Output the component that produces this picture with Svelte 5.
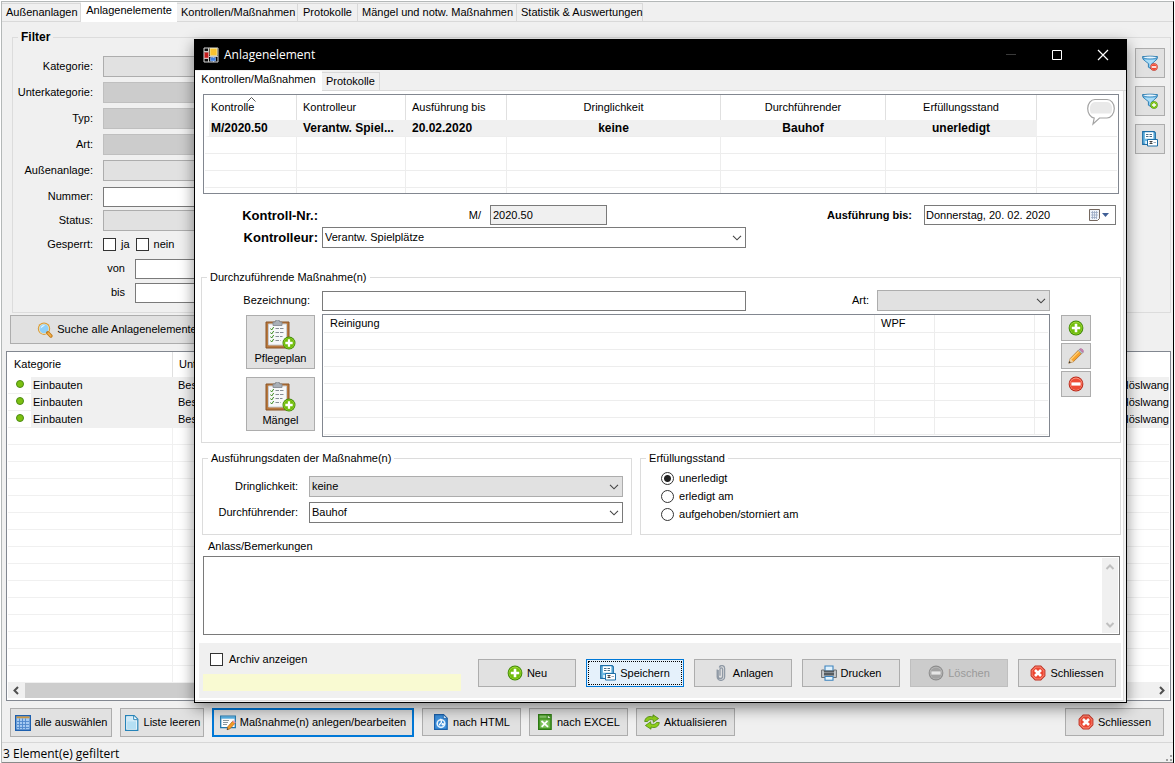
<script>
  const mainTabs = ['Außenanlagen', 'Anlagenelemente', 'Kontrollen/Maßnahmen', 'Protokolle', 'Mängel und notw. Maßnahmen', 'Statistik & Auswertungen'];
  const mainTabWidths = [79, 96, 121, 60, 159, 126];
  const filters = [
    { id: 'kategorie', label: 'Kategorie:', kind: 'select' },
    { id: 'unterkategorie', label: 'Unterkategorie:', kind: 'off' },
    { id: 'typ', label: 'Typ:', kind: 'off' },
    { id: 'art', label: 'Art:', kind: 'off' },
    { id: 'anlage', label: 'Außenanlage:', kind: 'select' },
    { id: 'nummer', label: 'Nummer:', kind: 'text' }
  ];
  const elements = [1, 2, 3];
  const emptyRows = Array.from({ length: 15 });
  const emptyChecks = Array.from({ length: 3 });
  const emptyTasks = Array.from({ length: 6 });
  let status = $state('unerledigt');
  const states = ['unerledigt', 'erledigt am', 'aufgehoben/storniert am'];
</script>

{#snippet plusDisc(x, y, s)}
  <svg {x} {y} width={s} height={s} viewBox="0 0 16 16">
    <circle cx="8" cy="8" r="7.4" fill="#3f8a05" />
    <circle cx="8" cy="8" r="6.4" fill="#a6dc3c" />
    <circle cx="8" cy="8.2" r="5.8" fill="#71bd0b" />
    <path d="M6.7 3.8h2.6v2.9h2.9v2.6H9.3v2.9H6.7V9.3H3.8V6.7h2.9z" fill="#fff" />
  </svg>
{/snippet}

{#snippet minusDisc(x, y, s)}
  <svg {x} {y} width={s} height={s} viewBox="0 0 16 16">
    <circle cx="8" cy="8" r="7.4" fill="#bb2719" />
    <circle cx="8" cy="8" r="6.4" fill="#ff9b86" />
    <circle cx="8" cy="8.2" r="5.8" fill="#ee4a34" />
    <path d="M3.4 6.4h9.2v3.2H3.4z" fill="#fff" />
  </svg>
{/snippet}

{#snippet chevron()}
  <svg class="chev" width="10" height="6" viewBox="0 0 10 6" aria-hidden="true"><path d="M1 .8l4 4 4-4" fill="none" stroke="#444" stroke-width="1.1" /></svg>
{/snippet}

{#snippet icon(name)}
  <svg class="icon" width="16" height="16" viewBox="0 0 16 16" aria-hidden="true">
    {#if name === 'plus'}
      {@render plusDisc(0, 0, 16)}
    {:else if name === 'minus'}
      {@render minusDisc(0, 0, 16)}
    {:else if name === 'minus-off'}
      <circle cx="8" cy="8" r="7.4" fill="#8d8d8d" />
      <circle cx="8" cy="8" r="6.3" fill="#bcbcbc" />
      <circle cx="8" cy="8.2" r="5.6" fill="#a2a2a2" />
      <path d="M3.4 6.4h9.2v3.2H3.4z" fill="#e6e6e6" />
    {:else if name === 'close'}
      <path d="M5 .6h6L15.4 5v6L11 15.4H5L.6 11V5z" fill="#bf2a1c" />
      <path d="M5.4 1.6h5.2l3.8 3.8v5.2l-3.8 3.8H5.4l-3.8-3.8V5.4z" fill="#ff927f" />
      <path d="M5.8 2.4h4.4l3.4 3.4v4.4l-3.4 3.4H5.8l-3.4-3.4V5.8z" fill="#ec4632" />
      <path d="M5 5l6 6M11 5l-6 6" stroke="#fff" stroke-width="2.6" />
    {:else if name === 'funnel-minus' || name === 'funnel-plus'}
      <path d="M.6 1.5h14.8L15 4.2 10 8.6v5.6l-3.6-2V8.6L1 4.2z" fill="#5db2e6" stroke="#2878ad" stroke-width=".9" />
      <path d="M2 4.6h12L9 9v3.6L7.4 12V8.8z" fill="#a9dcf7" />
      <ellipse cx="8" cy="2.5" rx="7" ry="1.4" fill="#e8f6ff" stroke="#2878ad" stroke-width=".7" />
      {#if name === 'funnel-minus'}{@render minusDisc(8, 8, 8)}{:else}{@render plusDisc(8, 8, 8)}{/if}
    {:else if name === 'save'}
      <path d="M.7.7h11.5l1.1 1.1v11.5H.7z" fill="#6fb9e3" stroke="#1d6ea6" stroke-width="1.2" />
      <path d="M3 1.3h8.3v6.4H3z" fill="#fff" />
      <path d="M4 3.5h2.5M7.5 3.5h2.5M4 5.5h2.5M7.5 5.5h2.5" stroke="#4d6f86" />
      <path d="M3.2 10h3v3h-3z" fill="#e5f4fd" />
      <path d="M5.5 8.5h10v6.500h-10z" fill="#fff" stroke="#1d6ea6" />
      <path d="M7.500 10.500h3M7.500 12.500h3M9 10.500v2" stroke="#333" stroke-width=".9" />
      <path d="M11.500 11.500h2.500" stroke="#9ab" />
    {:else if name === 'search'}
      <circle cx="7" cy="6.7" r="6.2" fill="#d99a33" />
      <circle cx="7" cy="6.7" r="5.2" fill="#f3e2b8" />
      <circle cx="7" cy="6.7" r="4.5" fill="#8fd0fa" />
      <path d="M3.6 6.5A3.6 3.6 0 018 3.2z" fill="#e4f6ff" />
      <path d="M10.8 10.8l3.1 3.2" stroke="#c07a1a" stroke-width="3.4" stroke-linecap="round" />
      <path d="M11.2 11.2l2.5 2.6" stroke="#f4b04a" stroke-width="1.8" stroke-linecap="round" />
    {:else if name === 'grid'}
      <path d="M.7.7h14.6v14.6H.7z" fill="#a4caf2" stroke="#1d5fae" stroke-width="1.4" />
      <path d="M1.4 1.4h13.2v1.9H1.4z" fill="#c79545" />
      <path d="M2 6.500h12M2 9.500h12M2 12.500h12M4.500 3.500v10.800M7.500 3.500v10.800M10.500 3.500v10.800" stroke="#4f88cc" stroke-width=".9" />
    {:else if name === 'page'}
      <path d="M1.6.6h8.6l3.6 3.6v11.2H1.6z" fill="#fff" stroke="#2583b8" stroke-width="1.2" />
      <path d="M3 2h5.8v3.4h3.6V14H3z" fill="#cfeaf8" />
      <path d="M3.2 6.5h9v7.4h-9z" fill="#b5dff3" />
      <path d="M9.7 1v3.7h3.7" fill="#fff" stroke="#2583b8" />
    {:else if name === 'form-edit'}
      <path d="M.7 1.2h14.6v11.5H.7z" fill="#fff" stroke="#2176ad" stroke-width="1.3" />
      <path d="M1 1.5h14v2.2H1z" fill="#57b0e4" />
      <path d="M3 5.500h6M3 7.500h5M3 9.500h4" stroke="#8b98a0" />
      <path d="M7 14.7l.8-3 5-5.6 2.3 2-5.1 5.7z" fill="#f59b26" stroke="#a8651a" stroke-width=".7" />
      <path d="M12.4 6.5l1.2-1.3 2.2 2-1.1 1.3z" fill="#e69ab6" />
      <path d="M6.8 15l.6-1.7 1.2 1z" fill="#333" />
    {:else if name === 'html'}
      <path d="M1.6.6h9l3.6 3.6v11.2H1.6z" fill="#3c8fdb" stroke="#1b5fa8" stroke-width="1.2" />
      <path d="M10.3 1v3.6h3.6" fill="#d8ecfb" stroke="#1b5fa8" stroke-width=".8" />
      <circle cx="8" cy="9.600" r="3.800" fill="none" stroke="#e6f3fd" stroke-width="1.600" />
      <path d="M8 4.800c-.6 2 1.300 2.500.2 4-1 1-2 .8-1.600 2.600" fill="none" stroke="#fff" stroke-width="1.300" />
      <circle cx="9.800" cy="10.300" r="1.200" fill="#fff" />
    {:else if name === 'excel'}
      <path d="M1.600.6h12.600v14.800H1.600z" fill="#4f9f2c" stroke="#2e7a14" stroke-width="1.200" />
      <path d="M2.600 1.600h7v2.200h-7z" fill="#83c465" />
      <path d="M10.300 1v3.600h3.600" fill="#e4f5dc" stroke="#2e7a14" stroke-width=".8" />
      <path d="M3.200 5.800h9.400v8H3.200z" fill="#7dc25c" />
      <path d="M4.500 7l6.500 5.800M10.500 6.800l-5.800 6" stroke="#fff" stroke-width="1.700" />
    {:else if name === 'refresh'}
      <path d="M.7 7.500C1 3.500 5 1.400 9 3V.8l5.600 3.700L9.300 8.300V6C7 5.200 4.300 5.600 3.600 7.500z" fill="#8fce1c" stroke="#4b8a0a" stroke-width=".8" />
      <path d="M15.300 8.500c-.3 4-4.300 6.100-8.300 4.500v2.200L1.400 11.500 6.700 7.700V10c2.300.8 5 .4 5.700-1.500z" fill="#8fce1c" stroke="#4b8a0a" stroke-width=".8" />
    {:else if name === 'clip'}
      <path d="M5.200 5v6.300a2.200 2.200 0 004.400 0V4.200a1.300 1.300 0 00-2.600 0v6.600M4.200 4.500v7.200a3.700 3.700 0 007.400 0V3.300A2.700 2.700 0 006.300 2.500" fill="none" stroke="#8f99a5" stroke-width="1.300" />
    {:else if name === 'print'}
      <path d="M4 1h8v5H4z" fill="#dff1fd" stroke="#3d83bd" stroke-width="1.100" />
      <path d="M.6 5h2.600v1.500h9.600V5h2.600v7.500H.6z" fill="#c5c8cb" stroke="#6a6e72" />
      <path d="M3 5.500h10v5H3z" fill="#555b60" />
      <path d="M3 7.500h10" stroke="#878d92" />
      <path d="M4 11.500h8v3.700H4z" fill="#e4f4fe" stroke="#3d83bd" stroke-width="1.100" />
    {:else if name === 'pencil'}
      <path d="M.8 15.200l1.500-4.700L10.600 2l3.300 3.300-8.400 8.300z" fill="#f8a32b" stroke="#a06420" stroke-width=".7" />
      <path d="M2.900 11.300l8.700-8.700" stroke="#ffd27a" stroke-width="1.300" />
      <path d="M.8 15.200l1.500-4.700 3.200 3.100z" fill="#efd2a4" />
      <path d="M.7 15.300l.7-2.200 1.500 1.500z" fill="#333" />
      <path d="M10.200 2.500l1.400-1.400 3.300 3.300-1.400 1.400z" fill="#b9c4cc" stroke="#76828c" stroke-width=".5" />
      <path d="M11.600 1.100c1.600-1.700 5 1.600 3.300 3.300z" fill="#d982bb" stroke="#9c5b88" stroke-width=".6" />
    {/if}
  </svg>
{/snippet}

{#snippet clipboard()}
  <svg width="32" height="32" viewBox="1 1 32 32" aria-hidden="true">
    <path d="M2 3h23v26H2z" fill="#b9793f" stroke="#8a5426" />
    <path d="M4.500 5h18v21h-18z" fill="#f7f8f9" stroke="#c9ccd0" />
    <path d="M9 3h2.200a2.300 2.300 0 014.600 0H18v3.500H9z" fill="#a9afb6" stroke="#7d848c" stroke-width=".8" />
    <path d="M6.500 9.500l1.200 1.500 2-3M6.500 13.500l1.200 1.500 2-3M6.500 17.500l1.200 1.500 2-3M6.500 21.500l1.200 1.500 2-3" fill="none" stroke="#3c8c1c" />
    <path d="M11.500 9.500h8M11.500 13.500h8M11.500 17.500h7M11.500 21.500h5" stroke="#868d95" stroke-dasharray="3.500 1" />
    {@render plusDisc(18, 17, 14)}
  </svg>
{/snippet}

<div class="window">
  <nav class="tabs">
    {#each mainTabs as tab, i}
      <button class="tab" class:active={i === 1} style="width:{mainTabWidths[i]}px">{tab}</button>
    {/each}
  </nav>

  <fieldset class="filter">
    <legend>Filter</legend>
    <div class="filter-body">
      <div class="filter-fields">
        <div class="wide-rows">
          {#each filters as f}
            <div class="frow">
              <label for={f.id}>{f.label}</label>
              {#if f.kind === 'text'}
                <input class="box" id={f.id} type="text" />
              {:else}
                <select class="combo gray" class:off={f.kind === 'off'} id={f.id} disabled={f.kind === 'off'}><option></option></select>
              {/if}
            </div>
          {/each}
        </div>
        <div class="tight-rows">
          <div class="frow"><label for="fstatus">Status:</label><select class="combo gray" id="fstatus"><option></option></select></div>
          <div class="frow">
            <span class="flabel">Gesperrt:</span>
            <input class="check" type="checkbox" id="ja" /><label class="tick" for="ja">ja</label>
            <input class="check" type="checkbox" id="nein" /><label class="tick" for="nein">nein</label>
          </div>
          <div class="frow range"><label for="von">von</label><input class="box" id="von" type="text" /></div>
          <div class="frow range"><label for="bis">bis</label><input class="box" id="bis" type="text" /></div>
        </div>
      </div>
      <div class="filter-tools">
        <button class="btn" aria-label="Filter entfernen">{@render icon('funnel-minus')}</button>
        <button class="btn" aria-label="Filter hinzufügen">{@render icon('funnel-plus')}</button>
        <button class="btn" aria-label="Filter speichern">{@render icon('save')}</button>
      </div>
    </div>
  </fieldset>

  <button class="btn search">{@render icon('search')}Suche alle Anlagenelemente</button>

  <div class="list">
    <table>
      <colgroup><col class="c-kat" /><col /><col class="c-ort" /></colgroup>
      <thead><tr><th class="ruled">Kategorie</th><th>Unterkategorie</th><th></th></tr></thead>
      <tbody>
        {#each elements as e (e)}
          <tr class="picked">
            <td class="kat"><span class="dot-cell"><svg width="8" height="8" viewBox="0 0 8 8" aria-hidden="true"><circle cx="4" cy="4" r="3.500" fill="#7cc011" stroke="#4b8a12" /></svg></span><span>Einbauten</span></td>
            <td>Bestand</td><td class="ort">Höslwang</td>
          </tr>
        {/each}
        {#each emptyRows as _}
          <tr><td class="ruled"></td><td></td><td></td></tr>
        {/each}
      </tbody>
    </table>
    <div class="hscroll">
      <svg width="17" height="15" viewBox="0 0 17 15"><path d="M10 4L6.500 7.500 10 11" fill="none" stroke="#505050" stroke-width="2" /></svg>
      <div class="thumb"></div>
      <svg width="17" height="15" viewBox="0 0 17 15"><path d="M8 4l3.500 3.500L8 11" fill="none" stroke="#505050" stroke-width="2" /></svg>
    </div>
  </div>

  <div class="actions">
    <button class="btn w102">{@render icon('grid')}alle auswählen</button>
    <button class="btn w84">{@render icon('page')}Liste leeren</button>
    <button class="btn w202 primary">{@render icon('form-edit')}Maßnahme(n) anlegen/bearbeiten</button>
    <button class="btn w99">{@render icon('html')}nach HTML</button>
    <button class="btn w99">{@render icon('excel')}nach EXCEL</button>
    <button class="btn w99">{@render icon('refresh')}Aktualisieren</button>
    <button class="btn w99 last">{@render icon('close')}Schliessen</button>
  </div>

  <footer>
    <span>3 Element(e) gefiltert</span>
    <svg width="8" height="8" viewBox="0 0 8 8" aria-hidden="true"><path d="M5 1h2v2H5zM5 5h2v2H5zM1 5h2v2H1z" fill="#a0a0a0" /></svg>
  </footer>
</div>

<div class="dialog" role="dialog" aria-labelledby="dlg-title">
  <header>
    <svg width="16" height="16" viewBox="0 0 16 16" aria-hidden="true">
      <path d="M1 1h14v14H1z" fill="#0a0a0a" stroke="#d9d9d9" />
      <path d="M1 4.500h5M5.500 1v14M1 11.500h5M5.500 9.500H15M10.500 10v5" stroke="#c9c9c9" />
      <path d="M7 1.500h7v7H7z" fill="#f9c230" stroke="#fff0a8" stroke-width=".8" />
      <path d="M1.500 5.500h4v5.500h-4z" fill="#c61d1d" stroke="#f19a9a" stroke-width=".6" />
      <path d="M7.500 10.500h5V14h-5z" fill="#3f7fe0" stroke="#a8caff" stroke-width=".6" />
    </svg>
    <h1 id="dlg-title">Anlagenelement</h1>
    <div class="win-buttons">
      <button aria-label="Minimieren"><svg width="12" height="12" viewBox="0 0 12 12"><path d="M1 5.500h10" stroke="#3a3a3a" /></svg></button>
      <button aria-label="Maximieren"><svg width="12" height="12" viewBox="0 0 12 12"><path d="M1.500 1.500h9v9h-9z" fill="none" stroke="#fff" /></svg></button>
      <button aria-label="Fenster schließen"><svg width="12" height="12" viewBox="0 0 12 12"><path d="M1 1l10 10M11 1L1 11" stroke="#fff" stroke-width="1.200" /></svg></button>
    </div>
  </header>
  <nav class="tabs dtabs">
    <button class="tab active">Kontrollen/Maßnahmen</button>
    <button class="tab">Protokolle</button>
  </nav>

  <div class="panel">
    <div class="grid-box checks">
      <table>
        <colgroup><col style="width:92px" /><col style="width:109px" /><col style="width:101px" /><col /><col style="width:165px" /><col style="width:151px" /><col style="width:80px" /></colgroup>
        <thead>
          <tr>
            <th class="sorted">Kontrolle<svg width="9" height="5" viewBox="0 0 9 5" aria-hidden="true"><path d="M.5 4.500l4-4 4 4" fill="none" stroke="#555" /></svg></th>
            <th>Kontrolleur</th><th>Ausführung bis</th><th class="mid">Dringlichkeit</th><th class="mid">Durchführender</th><th class="mid">Erfüllungsstand</th><th></th>
          </tr>
        </thead>
        <tbody>
          <tr class="picked"><td class="first">M/2020.50</td><td>Verantw. Spiel...</td><td>20.02.2020</td><td class="mid">keine</td><td class="mid">Bauhof</td><td class="mid">unerledigt</td><td></td></tr>
          {#each emptyChecks as _}
            <tr><td></td><td></td><td></td><td></td><td></td><td></td><td></td></tr>
          {/each}
          <tr class="rest"><td></td><td></td><td></td><td></td><td></td><td></td><td></td></tr>
        </tbody>
      </table>
      <svg class="bubble" width="28" height="28" viewBox="0 0 28 28" aria-hidden="true">
        <path d="M8 1.500h12c4 0 7.300 4 7.300 9s-3.300 9.500-7.300 9.500h-7.500L6 26l1.200-6C3.500 19.500.7 15.500.7 10.500c0-5 3.300-9 7.300-9z" fill="#fff" stroke="#a3a3a3" stroke-width="1.200" />
        <path d="M8 4h12c3 0 5 3 5 6s-.3 4-1 5.500H4c-.7-1.500-1-2.500-1-5.500s2-6 5-6z" fill="#e9e9e9" />
      </svg>
    </div>

    <div class="head-form">
      <div class="hrow">
        <label class="strong" for="nr">Kontroll-Nr.:</label>
        <span class="prefix">M/</span>
        <input class="box nr" id="nr" type="text" value="2020.50" readonly />
        <label class="due" for="due">Ausführung bis:</label>
        <div class="date box">
          <input id="due" type="text" value="Donnerstag, 20. 02. 2020" />
          <button aria-label="Kalender öffnen">
            <svg width="24" height="14" viewBox="0 0 24 14"><path d="M1.500 1.500h10v9l-2 2h-8z" fill="#eef3fa" stroke="#75685f" /><path d="M3 4.500h7M3 7h7M3 9.500h6M4.500 3v8M6.500 3v8M8.500 3v8" stroke="#9aaac4" stroke-width=".8" /><path d="M14 5h7l-3.500 4z" fill="#3f5f96" /></svg>
          </button>
        </div>
      </div>
      <div class="hrow">
        <label class="strong" for="person">Kontrolleur:</label>
        <span class="select person"><select class="combo" id="person"><option>Verantw. Spielplätze</option></select>{@render chevron()}</span>
      </div>
    </div>

    <fieldset class="tasks">
      <legend>Durchzuführende Maßnahme(n)</legend>
      <div class="task-grid">
        <label class="bez" for="bez">Bezeichnung:</label>
        <div class="bez-row">
          <input class="box" id="bez" type="text" />
          <label for="dart">Art:</label>
          <span class="select"><select class="combo gray" id="dart"><option></option></select>{@render chevron()}</span>
        </div>
        <span></span>
        <div class="plans">
          <button class="btn">{@render clipboard()}Pflegeplan</button>
          <button class="btn">{@render clipboard()}Mängel</button>
        </div>
        <div class="grid-box task-list">
          <table>
            <colgroup><col /><col style="width:60px" /><col style="width:100px" /><col style="width:13px" /></colgroup>
            <tbody>
              <tr><td>Reinigung</td><td>WPF</td><td></td><td></td></tr>
              {#each emptyTasks as _}
                <tr><td></td><td></td><td></td><td></td></tr>
              {/each}
            </tbody>
          </table>
        </div>
        <div class="task-tools">
          <button class="btn" aria-label="Hinzufügen">{@render icon('plus')}</button>
          <button class="btn" aria-label="Bearbeiten">{@render icon('pencil')}</button>
          <button class="btn" aria-label="Entfernen">{@render icon('minus')}</button>
        </div>
      </div>
    </fieldset>

    <div class="pair">
      <fieldset class="data">
        <legend>Ausführungsdaten der Maßnahme(n)</legend>
        <div class="data-rows">
          <label for="dring">Dringlichkeit:</label>
          <span class="select"><select class="combo gray" id="dring"><option>keine</option></select>{@render chevron()}</span>
          <label for="durch">Durchführender:</label>
          <span class="select"><select class="combo" id="durch"><option>Bauhof</option></select>{@render chevron()}</span>
        </div>
      </fieldset>
      <fieldset class="state">
        <legend>Erfüllungsstand</legend>
        <div class="radios">
          {#each states as s}
            <label><input type="radio" name="stand" value={s} bind:group={status} />{s}</label>
          {/each}
        </div>
      </fieldset>
    </div>

    <label class="note-label" for="note">Anlass/Bemerkungen</label>
    <div class="note">
      <textarea id="note"></textarea>
      <div class="vscroll">
        <svg width="16" height="16" viewBox="0 0 16 16"><path d="M4.500 11L8 7.500l3.500 3.500" fill="none" stroke="#bfbfbf" stroke-width="2" /></svg>
        <svg width="16" height="16" viewBox="0 0 16 16"><path d="M4.500 6L8 9.500 11.500 6" fill="none" stroke="#bfbfbf" stroke-width="2" /></svg>
      </div>
    </div>

    <div class="bottom">
      <div class="archive">
        <label><input class="check" type="checkbox" />Archiv anzeigen</label>
        <div class="notice"></div>
      </div>
      <div class="dlg-buttons">
        <button class="btn">{@render icon('plus')}Neu</button>
        <button class="btn focused">{@render icon('save')}Speichern</button>
        <button class="btn">{@render icon('clip')}Anlagen</button>
        <button class="btn">{@render icon('print')}Drucken</button>
        <button class="btn" disabled>{@render icon('minus-off')}Löschen</button>
        <button class="btn">{@render icon('close')}Schliessen</button>
      </div>
    </div>
  </div>
</div>

<style>
  :global(body) { background: #fff; }
  :global(#app) { position: relative; }
  .window, .dialog, button, input, select, textarea {
    font-family: "Liberation Sans", Arial, sans-serif;
    font-size: 11px;
    line-height: 13px;
    color: #000;
    box-sizing: border-box;
  }
  button, input, select, textarea { margin: 0; border-radius: 0; }
  .window {
    display: flex;
    flex-direction: column;
    min-height: calc(100vh - 1px);
    margin: 0 1px;
    border: 1px solid #b4b8b8;
    border-right-color: #000;
    border-bottom: 1px solid #000;
    background: #f0f0f0;
    position: relative;
    top: 1px;
  }
  .tabs {
    display: flex;
    align-items: flex-end;
    height: 19px;
    border-bottom: 1px solid #d9d9d9;
  }
  .tab {
    height: 18px;
    padding: 0 4px;
    border: 1px solid #d9d9d9;
    border-width: 1px 1px 0 0;
    background: #f0f0f0;
    white-space: nowrap;
  }
  .tab.active {
    height: 20px;
    margin-bottom: -1px;
    padding-bottom: 3px;
    border: 0;
    background: #fff;
  }

  fieldset { margin: 0; padding: 0; border: 1px solid #dcdcdc; min-width: 0; }
  legend { margin-left: 5px; padding: 0 3px; line-height: 13px; }
  .filter { margin: 9px 2px 0 10px; }
  .filter legend { font: bold 12px/13px "Liberation Sans", sans-serif; }
  .filter-body { display: flex; justify-content: space-between; padding: 4px 5px 9px 0; }
  .filter-fields { width: 300px; padding-top: 8px; }
  .wide-rows { display: grid; gap: 5px; margin-bottom: 3px; }
  .tight-rows { display: grid; gap: 3px; }
  .frow { display: flex; align-items: center; height: 21px; }
  .frow > label:first-child, .flabel { width: 80px; margin-right: 10px; text-align: right; flex: none; }
  .frow.range > label { width: 112px; }
  .frow .box, .frow .combo { flex: 1; min-width: 0; width: 0; }
  .frow .tick { margin: 0 6px 0 5px; }
  .filter-tools { display: grid; gap: 8px; align-content: start; }
  .filter-tools .btn { width: 30px; height: 30px; padding: 0; }

  .box, .combo { border: 1px solid #7a7a7a; background: #fff; padding: 0 2px; height: 20px; outline: 0; box-sizing: border-box; }
  .combo { appearance: none; height: 21px; width: 100%; }
  .gray { background: #e1e1e1; border-color: #adadad; }
  .off { background: #ccc; border-color: #bfbfbf; opacity: 1; }
  .select { display: block; position: relative; }
  .chev { position: absolute; right: 4px; top: 8px; pointer-events: none; }
  .check {
    appearance: none;
    width: 13px;
    height: 13px;
    border: 1px solid #333;
    background: #fff;
    flex: none;
  }
  .btn {
    display: flex;
    align-items: center;
    justify-content: center;
    gap: 4px;
    padding: 0 2px;
    border: 1px solid #adadad;
    background: #e1e1e1;
    white-space: nowrap;
  }
  .icon { flex: none; }
  .search { width: 214px; height: 29px; margin: 2px 0 0 8px; }

  table { width: 100%; border-collapse: separate; border-spacing: 0; table-layout: fixed; }
  th { font-weight: normal; text-align: left; }
  th, td { box-sizing: border-box; overflow: hidden; white-space: nowrap; }
  .list { margin: 7px 2px 0 4px; border: 1px solid #828790; background: #fff; padding: 0 1px 2px; }
  .c-kat { width: 165px; }
  .c-ort { width: 60px; }
  .list th { height: 25px; padding: 0 6px; }
  .list td { height: 17px; padding: 0 5px; border-bottom: 1px solid #f0f0f0; }
  .list .ruled { border-right: 1px solid #f0f0f0; }
  .list th.ruled { border-right-color: #e0e0e0; }
  .picked td { background: #f0f0f0; }
  .list .kat { padding: 0; line-height: 16px; }
  .list .ort { padding: 0; text-align: right; }
  .dot-cell { display: inline-block; width: 15px; padding-left: 8px; background: #fff; height: 16px; margin-right: 2px; }
  .dot-cell svg { display: block; margin-top: 3px; }
  .kat span { vertical-align: top; }
  .hscroll { display: flex; height: 15px; background: #f0f0f0; }
  .thumb { width: 70%; margin-right: auto; background: #cdcdcd; }

  .actions { display: flex; align-items: flex-start; gap: 8px; padding: 7px 9px 5px 8px; }
  .actions .btn { height: 28px; }
  .actions .w102, .actions .w84, .actions .w202 { height: 29px; }
  .w102 { width: 102px; }
  .w84 { width: 84px; }
  .w202 { width: 202px; }
  .w99 { width: 99px; }
  .primary { border: 2px solid #0078d7; }
  .last { margin-left: auto; }
  footer {
    display: flex;
    align-items: center;
    justify-content: space-between;
    flex: 1;
    border-top: 1px solid #d7d7d7;
    border-bottom: 1px solid #8a8a8a;
    padding: 3px 0 0 1px;
    font: 12px/16px "Open Sans", "Noto Sans", sans-serif;
  }
  footer svg { align-self: flex-end; }

  .dialog {
    position: absolute;
    left: 194px;
    right: 48px;
    top: 39px;
    border: 1px solid #000;
    background: #f0f0f0;
    box-shadow: 0 5px 14px rgba(0, 0, 0, 0.45);
  }
  header { display: flex; align-items: center; height: 30px; padding-left: 8px; background: #000; }
  h1 { margin: 0 0 0 5px; font: 12px/16px "Open Sans", "Noto Sans", sans-serif; color: #fff; }
  .win-buttons { display: flex; margin-left: auto; }
  .win-buttons button { width: 46px; height: 28px; padding: 0; border: 0; background: none; }
  .win-buttons svg { display: block; margin: auto; }
  .dtabs { height: 20px; }
  .dtabs .tab.active { width: 127px; }
  .panel { display: flex; flex-direction: column; margin: 0 2px 1px 0; padding: 3px 3px 2px 6px; border: 1px solid #dcdcdc; border-width: 0 1px 1px 0; background: #fff; }

  .grid-box { position: relative; border: 1px solid #828790; padding: 0 1px; background: #fff; }
  .checks { margin: 0 1px 0 2px; }
  .checks th, .checks td { padding: 0 6px; border-right: 1px solid #ededed; }
  .checks th { height: 25px; border-right-color: #e0e0e0; }
  .checks td { height: 17px; border-bottom: 1px solid #ededed; }
  .checks th:last-child, .checks td:last-child { border-right: 0; }
  .checks .mid { text-align: center; }
  .sorted { position: relative; }
  .sorted svg { position: absolute; left: 42px; top: 2px; }
  .checks .picked td { font: bold 12px/14px "Liberation Sans", sans-serif; border-right-color: #f0f0f0; }
  .checks .picked td:last-child { background: #fff; }
  .checks .picked .first { padding-left: 2px; border-left: 4px solid #fff; }
  .checks .rest td { height: 5px; border-bottom: 0; }
  .bubble { position: absolute; right: 3px; top: 3px; }

  .head-form { margin: 10px 4px 0 0; }
  .hrow { display: flex; align-items: center; height: 22px; }
  .strong { width: 117px; margin-right: 4px; text-align: right; font: bold 13px/15px "Liberation Sans", sans-serif; flex: none; }
  .prefix { width: 159px; margin-right: 9px; text-align: right; }
  .nr { width: 117px; background: #f0f0f0; }
  .due { margin: 0 12px 0 auto; font: bold 11px/13px "Liberation Sans", sans-serif; }
  .date { display: flex; align-items: center; width: 192px; padding: 0; }
  .date input { flex: 1; min-width: 0; border: 0; padding: 0 1px; outline: 0; }
  .date button { padding: 0; border: 0; background: none; margin-right: 3px; }
  .date svg { display: block; }
  .person { width: 424px; }

  .tasks { margin: 23px -1px 0 0; }
  .task-grid { display: grid; grid-template-columns: 113px 1fr 34px; gap: 3px 7px; padding: 6px 29px 5px 0; }
  .bez { text-align: right; padding-right: 5px; align-self: center; }
  .bez-row { display: flex; align-items: center; }
  .bez-row .box { flex: 1; min-width: 0; }
  .bez-row label { width: 123px; margin-right: 8px; text-align: right; }
  .bez-row .select { width: 173px; }
  .plans { display: grid; justify-content: end; align-content: start; gap: 8px; padding-top: 1px; }
  .plans .btn { flex-direction: column; gap: 0; width: 69px; height: 54px; padding: 0; }
  .task-list td { height: 17px; padding: 0 6px; border: 1px solid #ededed; border-width: 0 1px 1px 0; }
  .task-list tr:first-child td { height: 18px; }
  .task-list td:last-child { border-right: 0; }
  .task-list { padding-bottom: 1px; }
  .task-tools { display: grid; justify-content: end; align-content: start; gap: 2px; padding-top: 1px; }
  .task-tools .btn { width: 30px; height: 26px; padding: 0; }

  .pair { display: flex; gap: 8px; margin: 9px -1px 0 1px; }
  .data { flex: 429; }
  .state { flex: 480; }
  .data-rows { display: grid; grid-template-columns: 87px 1fr; gap: 5px 11px; align-items: center; padding: 11px 8px; }
  .data-rows label { text-align: right; }
  .radios { display: grid; gap: 4px; padding: 6px 0 0 20px; }
  .radios label { display: flex; align-items: center; gap: 5px; height: 14px; }
  .radios input {
    appearance: none;
    width: 13px;
    height: 13px;
    border: 1px solid #333;
    border-radius: 50%;
    background: #fff;
  }
  .radios input:checked { background: radial-gradient(circle, #222 0 3px, #fff 4px); }
  .note-label { margin: 5px 0 3px 7px; }
  .note { display: flex; height: 79px; margin-left: 2px; border: 1px solid #7a7a7a; padding: 1px; box-sizing: border-box; }
  textarea { flex: 1; min-width: 0; border: 0; resize: none; outline: 0; overflow: hidden; }
  .vscroll { display: flex; flex-direction: column; justify-content: space-between; width: 16px; background: #f0f0f0; }
  .bottom { display: flex; justify-content: space-between; gap: 16px; margin: 8px -1px 0 -2px; padding: 0 5px 0 4px; height: 55px; background: #f0f0f0; }
  .archive { flex: 0 1 258px; padding-top: 10px; }
  .archive label { display: flex; align-items: center; gap: 6px; padding-left: 7px; }
  .notice { height: 17px; margin-top: 8px; background: #f9fad2; }
  .dlg-buttons { display: flex; gap: 10px; padding-top: 16px; }
  .dlg-buttons .btn { width: 98px; height: 28px; }
  .dlg-buttons .focused { border-color: #0078d7; background: #e5f1fb; outline: 1px dotted #000; outline-offset: -3px; }
  .dlg-buttons .btn:disabled { background: #ccc; border-color: #bfbfbf; color: #9a9a9a; }
</style>
